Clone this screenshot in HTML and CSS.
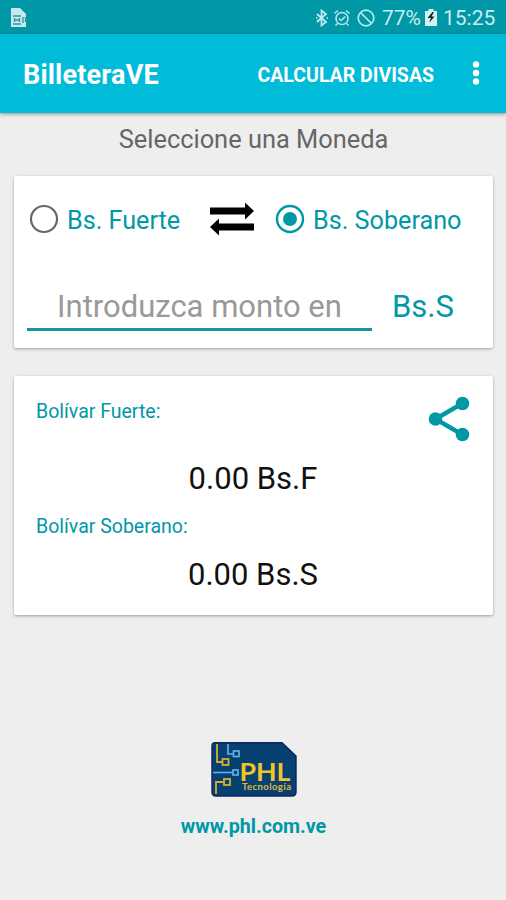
FILE: index.html
```html
<!DOCTYPE html>
<html lang="es">
<head>
<meta charset="utf-8">
<title>BilleteraVE</title>
<link rel="stylesheet" href="styles.css">
</head>
<body>
<div class="status">
  <svg class="sim" width="18" height="20" viewBox="0 0 18 20">
    <path d="M1 0h9l6 6v13H1z" fill="#c5e9ed"/>
    <path d="M3 8h8M3 16h8M4.500 10v4M9.500 10v4M5 12h4M13 9v6M15.500 9v5" fill="none" stroke="#3299a5" stroke-width="1.4"/>
  </svg>
  <svg class="bt" width="14" height="18" viewBox="0 0 14 18"><path d="M2 5l9 8-4.500 3.500V1.500L11 5l-9 8M1 9h1.500M11.500 9H13" fill="none" stroke="#c5edf1" stroke-width="1.700"/></svg>
  <svg class="alarm" width="18" height="18" viewBox="0 0 18 18"><g fill="none" stroke="#b9e7ec" stroke-width="1.500"><circle cx="9" cy="9.500" r="6"/><path d="M6 9.500l2.200 2 4-4M1.500 4.500l3.500-3M16.500 4.500l-3.500-3M4.500 14.500l-2 2M13.500 14.500l2 2"/></g></svg>
  <svg class="block" width="20" height="20" viewBox="0 0 20 20"><g fill="none" stroke="#b9e7ec" stroke-width="1.700"><circle cx="10" cy="10" r="7.800"/><path d="M4.500 4.500l11 11"/></g></svg>
  <span class="percent">77%</span>
  <svg class="battery" width="12" height="17" viewBox="0 0 12 17"><path d="M3.500 0h5v2H12v15H0V2h3.500z" fill="#d4f2f4"/><path d="M7.500 3L2.500 9H6l-2 5 5.500-6.500H6.500L9 3z" fill="#08282c"/></svg>
  <span class="clock">15:25</span>
</div>
<header class="toolbar">
  <h1 class="title">BilleteraVE</h1>
  <span class="action">CALCULAR DIVISAS</span>
  <svg class="more" width="8" height="24" viewBox="0 0 8 24"><g fill="#fff"><circle cx="4" cy="3.400" r="3.200"/><circle cx="4" cy="12" r="3.200"/><circle cx="4" cy="20.400" r="3.200"/></g></svg>
</header>
<main class="content">
  <p class="prompt">Seleccione una Moneda</p>
  <section class="card convert">
    <div class="choices">
      <svg class="radio" width="30" height="30" viewBox="0 0 30 30"><circle cx="15" cy="15" r="13" fill="none" stroke="#666" stroke-width="2.200"/></svg>
      <span class="choice first">Bs. Fuerte</span>
      <svg class="swap" width="46" height="34" viewBox="0 0 46 34"><path d="M1 5.500h35V.500L45 9l-9 8.500v-5H1zM45 21.500H10v-5L1 25l9 8.500v-5h35z"/></svg>
      <svg class="radio" width="30" height="30" viewBox="0 0 30 30"><circle cx="15" cy="15" r="13" fill="none" stroke="#0097a7" stroke-width="2.400"/><circle cx="15" cy="15" r="7" fill="#0097a7"/></svg>
      <span class="choice second">Bs. Soberano</span>
    </div>
    <div class="amount">
      <div class="field"><span class="hint">Introduzca monto en</span></div>
      <span class="unit">Bs.S</span>
    </div>
  </section>
  <section class="card results">
    <div class="result-head">
      <span class="label fuerte">Bolívar Fuerte:</span>
      <svg class="share" width="42" height="46" viewBox="0 0 42 46"><path d="M35 7L7.500 23 35 39" fill="none" stroke="#0097a7" stroke-width="4.400"/><g fill="#0097a7"><circle cx="34.500" cy="7.500" r="6.800"/><circle cx="7.500" cy="23" r="6.800"/><circle cx="34.500" cy="38.500" r="6.800"/></g></svg>
    </div>
    <p class="value">0.00 Bs.F</p>
    <span class="label soberano">Bolívar Soberano:</span>
    <p class="value last">0.00 Bs.S</p>
  </section>
  <footer class="footer">
    <svg class="logo" width="86" height="55" viewBox="0 0 86 55">
      <path d="M4 .700h67L85 14v36q0 4-4 4H5q-4 0-4-4V4Q1 .700 4 .700z" fill="#064172" stroke="#10235c" stroke-width="1.400"/>
      <g fill="none" stroke="#d8ad35" stroke-width="1.800"><path d="M6 2v18h5M5 52V40h7"/><rect x="11.500" y="17" width="6" height="6"/><rect x="13" y="37" width="6" height="6"/></g>
      <g fill="none" stroke="#65b6ee" stroke-width="1.600"><path d="M17 2v10h6M2 30.500h20"/><rect x="22.500" y="9" width="5.500" height="5.500"/><rect x="22" y="28" width="5" height="5"/></g>
      <text class="brand" x="28.500" y="39" textLength="51" lengthAdjust="spacingAndGlyphs">PHL</text>
      <text class="tagline" x="31" y="48" textLength="49">Tecnología</text>
    </svg>
    <span class="site">www.phl.com.ve</span>
  </footer>
</main>
</body>
</html>
```
FILE: styles.css
```css
* { box-sizing: border-box; }
body {
  margin: 0;
  height: 900px;
  overflow: hidden;
  background: #eee;
  font-family: Roboto, "Liberation Sans", sans-serif;
  color: #0097a7;
}
svg { display: block; flex: none; }
h1, p { margin: 0; }
span, p, h1 { white-space: nowrap; }
.status {
  display: flex;
  align-items: center;
  height: 34px;
  padding: 1px 10px 0;
  background: #0097a7;
  color: #c8ecef;
}
.bt { margin-left: auto; margin-right: 4px; }
.alarm { margin-right: 5px; }
.block { margin-right: 6px; }
.percent { width: 39px; margin-right: 4px; font-size: 21px; }
.battery { margin-right: 6px; }
.clock { width: 53px; font-size: 21px; }
.toolbar {
  position: relative;
  display: flex;
  align-items: center;
  height: 79px;
  padding: 3px 26px 0 23px;
  background: #00bcd9;
  color: #fff;
  box-shadow: 0 1px 4px rgba(0, 0, 0, .4);
}
.title { font-size: 27px; font-weight: 700; letter-spacing: .2px; }
.action { margin-left: auto; margin-right: 38px; font-size: 19.5px; font-weight: 700; }
.more { margin-top: -4px; }
.content { padding: 0 13px 0 14px; }
.prompt {
  height: 63px;
  padding-top: 11px;
  text-align: center;
  font-size: 25.4px;
  line-height: 30px;
  color: #666;
}
.card {
  background: #fff;
  border-radius: 2px;
  box-shadow: 0 1px 3px rgba(0, 0, 0, .34);
}
.convert { height: 172px; padding: 26px 13px 0 15px; }
.choices { display: flex; align-items: center; height: 34px; }
.choice { font-size: 25.2px; line-height: 34px; padding-top: 4px; }
.first { width: 150px; padding-left: 8px; }
.swap { margin-right: 20px; }
.second { padding-left: 8px; }
.amount { display: flex; height: 68px; margin: 27px 0 0 -2px; }
.field {
  width: 345px;
  border-bottom: 3px solid #1692a1;
  text-align: center;
  color: #999;
}
.hint, .unit { font-size: 31px; line-height: 36px; padding-top: 26px; display: block; }
.unit { margin-left: 20px; }
.results { height: 239px; margin-top: 28px; padding: 20px 23px 0 22px; }
.result-head { display: flex; justify-content: space-between; height: 62px; }
.label { display: block; font-size: 19.5px; line-height: 24px; }
.fuerte { padding-top: 4px; }
.value { text-align: center; font-size: 31px; line-height: 36px; color: #111; margin-top: 3px; }
.soberano { margin-top: 18px; }
.last { margin-top: 18px; }
.footer { display: flex; flex-direction: column; align-items: center; padding-top: 127px; }
.site { margin-top: 18px; font-size: 19.7px; line-height: 24px; font-weight: 700; }
.brand { font: 700 25px Lato, sans-serif; fill: #f1c32b; }
.tagline { font: 700 9.5px Lato, sans-serif; fill: #e0b73a; }
```
